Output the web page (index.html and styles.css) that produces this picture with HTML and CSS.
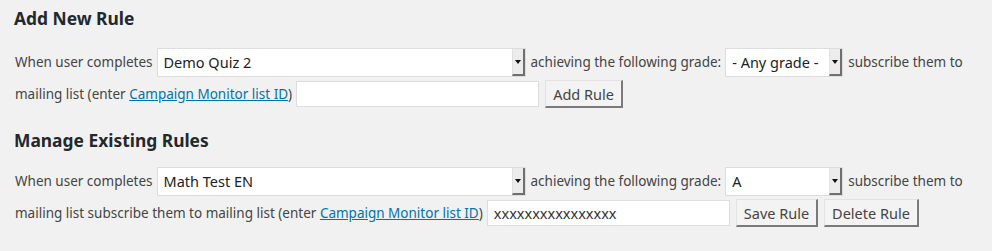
FILE: index.html
```html
<!DOCTYPE html>
<html>
<head>
<meta charset="utf-8">
<link rel="stylesheet" href="styles.css">
</head>
<body>
<div class="wrap">
  <h2 class="title">Add New Rule</h2>
  <div class="rule">
    <div class="row row-top">
      <span class="label">When user completes</span>
      <div class="select select-quiz"><span class="value">Demo Quiz 2</span><span class="arrow"></span></div>
      <span class="label">achieving the following grade:</span>
      <div class="select select-grade"><span class="value">- Any grade -</span><span class="arrow"></span></div>
      <span class="label">subscribe them to</span>
    </div>
    <div class="row row-bottom">
      <span class="label">mailing list (enter <a href="#">Campaign Monitor list ID</a>)</span>
      <input class="text-input" type="text" value="">
      <button class="btn">Add Rule</button>
    </div>
  </div>

  <h2 class="title title-second">Manage Existing Rules</h2>
  <div class="rule rule-second">
    <div class="row row-top">
      <span class="label">When user completes</span>
      <div class="select select-quiz"><span class="value">Math Test EN</span><span class="arrow"></span></div>
      <span class="label">achieving the following grade:</span>
      <div class="select select-grade"><span class="value">A</span><span class="arrow"></span></div>
      <span class="label">subscribe them to</span>
    </div>
    <div class="row row-bottom">
      <span class="label">mailing list subscribe them to mailing list (enter <a href="#">Campaign Monitor list ID</a>)</span>
      <input class="text-input" type="text" value="xxxxxxxxxxxxxxxx">
      <button class="btn">Save Rule</button>
      <button class="btn">Delete Rule</button>
    </div>
  </div>
</div>
</body>
</html>
```

FILE: styles.css
```css
html, body {
  margin: 0;
  padding: 0;
  background: #f1f1f1;
}
body {
  font-family: "Noto Sans", "Open Sans", sans-serif;
  color: #444;
  font-size: 13.5px;
}
.wrap {
  padding: 0 14px;
}
.title {
  margin: 7px 0 0;
  font-size: 17.4px;
  line-height: 22px;
  font-weight: 700;
  color: #23282d;
}
.title-second {
  margin-top: 19px;
}
.rule {
  margin-top: 17px;
}
.rule-second {
  margin-top: 14px;
}
.row {
  display: flex;
  align-items: center;
  height: 32px;
}
.label {
  padding-left: 1px;
  white-space: nowrap;
}
.label a {
  color: #0073aa;
  text-decoration: underline;
}
.select {
  display: flex;
  align-items: stretch;
  height: 29px;
  box-sizing: border-box;
  border: 1px solid #ddd;
  background: #fff;
  margin: 0 4px;
}
.select .value {
  flex: 1;
  display: flex;
  align-items: center;
  padding-left: 6px;
  font-size: 14.5px;
  color: #222;
  white-space: nowrap;
}
.select .arrow {
  width: 10px;
  background: #ececec;
  border-left: 1px solid #e0e0e0;
  border-right: 2px solid #6f6f6f;
  border-bottom: 2px solid #6f6f6f;
  position: relative;
}
.select .arrow::after {
  content: "";
  position: absolute;
  left: 2px;
  top: 11px;
  border-left: 3px solid transparent;
  border-right: 3px solid transparent;
  border-top: 4px solid #111;
}
.select-quiz {
  width: 369px;
}
.select-grade {
  width: 118px;
}
.text-input {
  box-sizing: border-box;
  height: 26px;
  width: 243px;
  margin: 0 6px 0 4px;
  border: 1px solid #ddd;
  background: #fff;
  padding: 0 6px;
  font-family: inherit;
  font-size: 14.5px;
  color: #333;
  outline: none;
}
.btn {
  box-sizing: border-box;
  height: 28px;
  padding: 0 7px;
  margin-right: 6px;
  font-family: inherit;
  font-size: 14.5px;
  color: #444;
  background: #f3f3f3;
  border-style: solid;
  border-width: 1px 2px 2px 1px;
  border-color: #e2e2e2 #7a7a7a #7a7a7a #e2e2e2;
  border-radius: 0;
}
```
